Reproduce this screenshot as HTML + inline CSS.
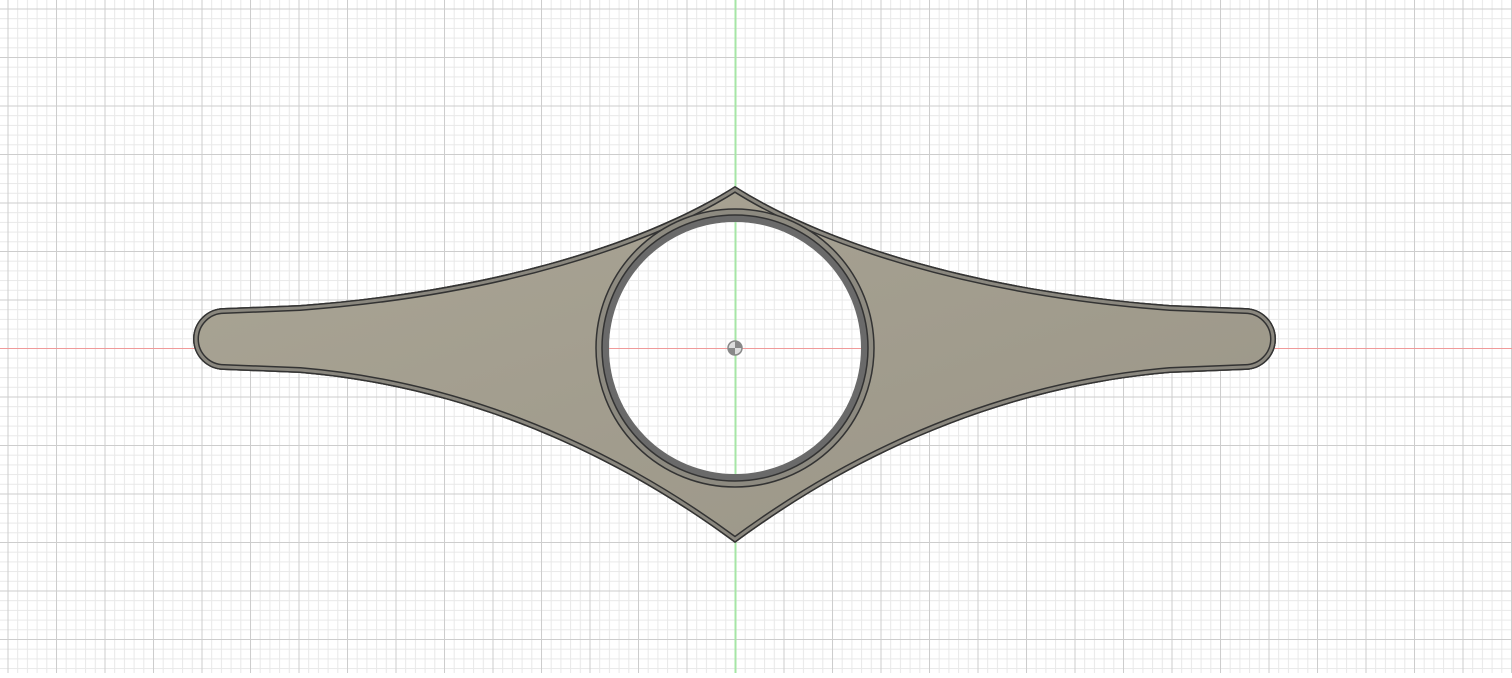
<!DOCTYPE html>
<html><head><style>html,body{margin:0;padding:0;background:#fff;overflow:hidden}</style></head>
<body>
<svg width="1512" height="673" xmlns="http://www.w3.org/2000/svg">
<defs>
<pattern id="mn" x="735" y="348" width="9.7" height="9.7" patternUnits="userSpaceOnUse">
<path d="M0,0.5 H9.7 M0.5,0 V9.7" stroke="#e8e8e8" stroke-width="1" fill="none"/>
</pattern>
<pattern id="mj" x="735" y="348" width="48.5" height="48.5" patternUnits="userSpaceOnUse">
<path d="M0,0.5 H48.5 M0.5,0 V48.5" stroke="#cdcdcd" stroke-width="1" fill="none"/>
</pattern>
<path id="s" d="M735,186 C650,240 500,290 300,305 L224,308 A31,31 0 0 0 224,370 L300,373 C500,390 650,480 735,543 C820,480 970,390 1170,373 L1245,370 A31,31 0 0 0 1245,308 L1170,305 C970,290 820,240 735,186 Z"/>
<clipPath id="c"><use href="#s"/></clipPath>
<linearGradient id="g" x1="0" y1="0" x2="1" y2="1"><stop offset="0" stop-color="#aaa595"/><stop offset="1" stop-color="#9a9587"/></linearGradient>
</defs>
<rect width="1512" height="673" fill="url(#mn)"/>
<rect width="1512" height="673" fill="url(#mj)"/>
<rect x="0" y="348" width="1512" height="1" fill="#f09a9a"/>
<rect x="734.5" y="0" width="2" height="673" fill="#a6e6a6"/>
<use href="#s" fill="url(#g)"/>
<g clip-path="url(#c)">
<use href="#s" fill="none" stroke="#333" stroke-width="12"/>
<use href="#s" fill="none" stroke="#8a877e" stroke-width="9"/>
<use href="#s" fill="none" stroke="#333" stroke-width="3"/>
</g>
<circle cx="735" cy="348" r="139" fill="#8d8a80" stroke="#333" stroke-width="1.5"/>
<circle cx="735" cy="348" r="133" fill="#6a6a6a" stroke="#333" stroke-width="1.5"/>
<circle cx="735" cy="348" r="126" fill="#fff"/>
<rect x="609" y="222" width="252" height="252" fill="url(#mn)" clip-path="circle(126px at 126px 126px)"/>
<rect x="609" y="348" width="252" height="1" fill="#f09a9a"/>
<rect x="734.5" y="222" width="2" height="252" fill="#a6e6a6"/>
<circle cx="735" cy="348" r="7" fill="#ddd" stroke="#888" stroke-width="1.5"/>
<path d="M735,341 A7,7 0 0 1 742,348 L735,348 Z M735,355 A7,7 0 0 1 728,348 L735,348 Z" fill="#888"/>
</svg>
</body></html>
